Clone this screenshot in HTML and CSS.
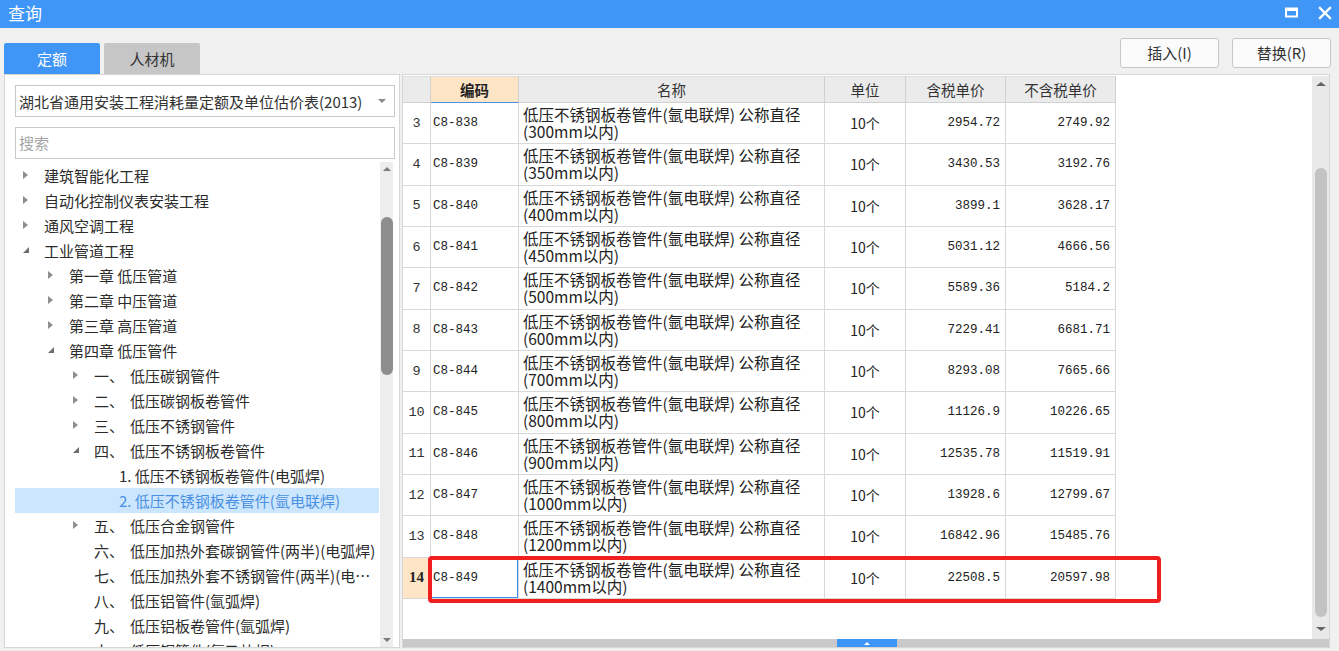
FILE: index.html
```html
<!DOCTYPE html>
<html lang="zh-CN">
<head>
<meta charset="utf-8">
<title>查询</title>
<link rel="stylesheet" href="styles.css">
</head>
<body>
<div class="titlebar">
  <span class="title">查询</span>
  <div class="winbtns">
    <svg class="wmax" width="14" height="12" viewBox="0 0 14 12"><rect x="1" y="1.5" width="11" height="8" fill="none" stroke="#fff" stroke-width="2"/><rect x="1" y="1" width="11" height="3" fill="#fff"/></svg>
    <svg class="wclose" width="14" height="14" viewBox="0 0 14 14"><path d="M2 2 L12 12 M12 2 L2 12" stroke="#fff" stroke-width="2.4" stroke-linecap="square"/></svg>
  </div>
</div>

<div class="toolbar">
  <div class="tabs">
    <div class="tab active">定额</div>
    <div class="tab">人材机</div>
  </div>
  <div class="actions">
    <div class="btn">插入(I)</div>
    <div class="btn">替换(R)</div>
  </div>
</div>

<div class="content">
  <div class="left">
    <div class="select"><span>湖北省通用安装工程消耗量定额及单位估价表(2013)</span><span class="caret"></span></div>
    <div class="search">搜索</div>
    <div class="tree-wrap">
      <div class="tree">
        <div class="row l1"><span class="arr r"></span><span class="txt">建筑智能化工程</span></div>
        <div class="row l1"><span class="arr r"></span><span class="txt">自动化控制仪表安装工程</span></div>
        <div class="row l1"><span class="arr r"></span><span class="txt">通风空调工程</span></div>
        <div class="row l1"><span class="arr d"></span><span class="txt">工业管道工程</span></div>
        <div class="row l2"><span class="arr r"></span><span class="txt">第一章 低压管道</span></div>
        <div class="row l2"><span class="arr r"></span><span class="txt">第二章 中压管道</span></div>
        <div class="row l2"><span class="arr r"></span><span class="txt">第三章 高压管道</span></div>
        <div class="row l2"><span class="arr d"></span><span class="txt">第四章 低压管件</span></div>
        <div class="row l3"><span class="arr r"></span><span class="no">一、</span><span class="txt">低压碳钢管件</span></div>
        <div class="row l3"><span class="arr r"></span><span class="no">二、</span><span class="txt">低压碳钢板卷管件</span></div>
        <div class="row l3"><span class="arr r"></span><span class="no">三、</span><span class="txt">低压不锈钢管件</span></div>
        <div class="row l3"><span class="arr d"></span><span class="no">四、</span><span class="txt">低压不锈钢板卷管件</span></div>
        <div class="row l4"><span class="arr"></span><span class="txt">1. 低压不锈钢板卷管件(电弧焊)</span></div>
        <div class="row l4 sel"><span class="arr"></span><span class="txt">2. 低压不锈钢板卷管件(氩电联焊)</span></div>
        <div class="row l3"><span class="arr r"></span><span class="no">五、</span><span class="txt">低压合金钢管件</span></div>
        <div class="row l3"><span class="arr"></span><span class="no">六、</span><span class="txt">低压加热外套碳钢管件(两半)(电弧焊)</span></div>
        <div class="row l3"><span class="arr"></span><span class="no">七、</span><span class="txt">低压加热外套不锈钢管件(两半)(电弧焊)</span></div>
        <div class="row l3"><span class="arr"></span><span class="no">八、</span><span class="txt">低压铝管件(氩弧焊)</span></div>
        <div class="row l3"><span class="arr"></span><span class="no">九、</span><span class="txt">低压铝板卷管件(氩弧焊)</span></div>
        <div class="row l3"><span class="arr"></span><span class="no">十、</span><span class="txt">低压铜管件(氧乙炔焊)</span></div>
      </div>
      <div class="vscroll slim">
        <span class="up"></span>
        <div class="track"><div class="thumb"></div></div>
        <span class="down"></span>
      </div>
    </div>
  </div>

  <div class="right">
    <div class="grid-area">
      <div class="grid">
        <div class="h rn"></div><div class="h hcode">编码</div><div class="h">名称</div><div class="h">单位</div><div class="h">含税单价</div><div class="h">不含税单价</div>

        <div class="c rn">3</div><div class="c code">C8-838</div><div class="c name">低压不锈钢板卷管件(氩电联焊) 公称直径<br>(300mm以内)</div><div class="c unit">10个</div><div class="c price">2954.72</div><div class="c price">2749.92</div>
        <div class="c rn">4</div><div class="c code">C8-839</div><div class="c name">低压不锈钢板卷管件(氩电联焊) 公称直径<br>(350mm以内)</div><div class="c unit">10个</div><div class="c price">3430.53</div><div class="c price">3192.76</div>
        <div class="c rn">5</div><div class="c code">C8-840</div><div class="c name">低压不锈钢板卷管件(氩电联焊) 公称直径<br>(400mm以内)</div><div class="c unit">10个</div><div class="c price">3899.1</div><div class="c price">3628.17</div>
        <div class="c rn">6</div><div class="c code">C8-841</div><div class="c name">低压不锈钢板卷管件(氩电联焊) 公称直径<br>(450mm以内)</div><div class="c unit">10个</div><div class="c price">5031.12</div><div class="c price">4666.56</div>
        <div class="c rn">7</div><div class="c code">C8-842</div><div class="c name">低压不锈钢板卷管件(氩电联焊) 公称直径<br>(500mm以内)</div><div class="c unit">10个</div><div class="c price">5589.36</div><div class="c price">5184.2</div>
        <div class="c rn">8</div><div class="c code">C8-843</div><div class="c name">低压不锈钢板卷管件(氩电联焊) 公称直径<br>(600mm以内)</div><div class="c unit">10个</div><div class="c price">7229.41</div><div class="c price">6681.71</div>
        <div class="c rn">9</div><div class="c code">C8-844</div><div class="c name">低压不锈钢板卷管件(氩电联焊) 公称直径<br>(700mm以内)</div><div class="c unit">10个</div><div class="c price">8293.08</div><div class="c price">7665.66</div>
        <div class="c rn">10</div><div class="c code">C8-845</div><div class="c name">低压不锈钢板卷管件(氩电联焊) 公称直径<br>(800mm以内)</div><div class="c unit">10个</div><div class="c price">11126.9</div><div class="c price">10226.65</div>
        <div class="c rn">11</div><div class="c code">C8-846</div><div class="c name">低压不锈钢板卷管件(氩电联焊) 公称直径<br>(900mm以内)</div><div class="c unit">10个</div><div class="c price">12535.78</div><div class="c price">11519.91</div>
        <div class="c rn">12</div><div class="c code">C8-847</div><div class="c name">低压不锈钢板卷管件(氩电联焊) 公称直径<br>(1000mm以内)</div><div class="c unit">10个</div><div class="c price">13928.6</div><div class="c price">12799.67</div>
        <div class="c rn">13</div><div class="c code">C8-848</div><div class="c name">低压不锈钢板卷管件(氩电联焊) 公称直径<br>(1200mm以内)</div><div class="c unit">10个</div><div class="c price">16842.96</div><div class="c price">15485.76</div>
        <div class="c rn cur">14</div><div class="c code focus">C8-849</div><div class="c name">低压不锈钢板卷管件(氩电联焊) 公称直径<br>(1400mm以内)</div><div class="c unit">10个</div><div class="c price">22508.5</div><div class="c price">20597.98</div>
      </div>
      <div class="fill"></div>
      <div class="vscroll wide">
        <span class="up"></span>
        <div class="track"><div class="thumb"></div></div>
        <span class="down"></span>
      </div>
    </div>
    <div class="hscroll"><div class="hgap"></div><div class="hthumb"><span class="htri"></span></div></div>
    <div class="redbox"></div>
  </div>
</div>
</body>
</html>
```

FILE: styles.css
```css
html, body {
  margin: 0;
  padding: 0;
}
body {
  width: 1339px;
  height: 651px;
  overflow: hidden;
  background: #f0f0f0;
  font-family: "Noto Sans CJK SC", "Noto Sans", sans-serif;
  color: #333;
  display: flex;
  flex-direction: column;
}

/* title bar */
.titlebar {
  height: 28px;
  flex: none;
  background: #3f96f7;
  display: flex;
  align-items: center;
  justify-content: space-between;
  padding: 0 7px 0 8px;
}
.title {
  color: #fff;
  font-size: 17px;
  line-height: 28px;
  margin-top: -3px;
}
.winbtns {
  display: flex;
  align-items: center;
  gap: 19px;
  margin-top: -3px;
}

/* toolbar */
.toolbar {
  height: 46px;
  flex: none;
  display: flex;
  justify-content: space-between;
  padding: 0 8px 0 4px;
}
.tabs {
  align-self: flex-end;
  display: flex;
  gap: 4px;
}
.tab {
  width: 96px;
  height: 31px;
  background: #c6c6c6;
  border-radius: 2px 2px 0 0;
  font-size: 15px;
  line-height: 31px;
  text-align: center;
  color: #333;
}
.tab.active {
  background: #3f96f7;
  color: #fff;
}
.actions {
  display: flex;
  gap: 13px;
  margin-top: 10px;
}
.btn {
  width: 97px;
  height: 28px;
  border: 1px solid #c6c6c6;
  border-radius: 3px;
  background: #fbfbfb;
  font-size: 15px;
  line-height: 28px;
  text-align: center;
  color: #333;
}

/* content */
.content {
  height: 574px;
  flex: none;
  display: flex;
  gap: 2px;
  padding: 0 9px 0 4px;
}
.left {
  width: 396px;
  box-sizing: border-box;
  border: 1px solid #d6d6d6;
  background: #fff;
  padding: 10px 4px 0 10px;
  display: flex;
  flex-direction: column;
}
.select {
  width: 380px;
  height: 32px;
  box-sizing: border-box;
  border: 1px solid #c8c8c8;
  display: flex;
  align-items: center;
  justify-content: space-between;
  padding: 0 8px 0 3px;
  font-size: 15px;
  color: #333;
  flex: none;
}
.caret {
  width: 0;
  height: 0;
  border-top: 4px solid #8a8a8a;
  border-left: 4px solid transparent;
  border-right: 4px solid transparent;
}
.search {
  width: 380px;
  height: 32px;
  box-sizing: border-box;
  border: 1px solid #c8c8c8;
  margin-top: 10px;
  padding-left: 3px;
  font-size: 15px;
  line-height: 30px;
  color: #a6a6a6;
  flex: none;
}
.tree-wrap {
  margin-top: 3px;
  flex: 1;
  min-height: 0;
  display: flex;
}
.tree {
  width: 364px;
  flex: none;
  overflow: hidden;
  padding-top: 0.5px;
}
.row {
  height: 25px;
  display: flex;
  align-items: center;
  font-size: 15px;
  color: #2b2b2b;
  white-space: nowrap;
}
.row.l1 { padding-left: 8px; }
.row.l2 { padding-left: 33px; }
.row.l3 { padding-left: 58px; }
.row.l4 { padding-left: 83px; }
.row.sel {
  background: #cce6fd;
  color: #4a90e2;
}
.arr {
  width: 21px;
  height: 25px;
  flex: none;
  position: relative;
}
.arr.r::before {
  content: "";
  position: absolute;
  left: 0;
  top: 8px;
  border-left: 5px solid #8e8e8e;
  border-top: 4.5px solid transparent;
  border-bottom: 4.5px solid transparent;
}
.arr.d::before {
  content: "";
  position: absolute;
  left: 0;
  top: 9px;
  border-bottom: 6px solid #6e6e6e;
  border-left: 6px solid transparent;
}
.no {
  width: 36px;
  flex: none;
}
.txt {
  flex: 1;
  min-width: 0;
  overflow: hidden;
  text-overflow: ellipsis;
}

/* scrollbars */
.vscroll {
  flex: none;
  display: flex;
  flex-direction: column;
  align-items: center;
  background: #ededed;
}
.vscroll.slim {
  width: 13px;
  margin-left: 1px;
}
.vscroll .up, .vscroll .down {
  width: 0;
  height: 0;
  flex: none;
  border-left: 4px solid transparent;
  border-right: 4px solid transparent;
}
.vscroll .up {
  border-bottom: 4px solid #7a7a7a;
  margin-top: 5px;
}
.vscroll .down {
  border-top: 4px solid #7a7a7a;
  margin-bottom: 5px;
}
.vscroll .track {
  flex: 1;
  width: 100%;
  display: flex;
  justify-content: center;
}
.vscroll.slim .thumb {
  width: 12px;
  height: 158px;
  margin-top: 46px;
  border-radius: 6px;
  background: #8d8d8d;
}
.vscroll.wide {
  width: 17px;
  background: #e9e9e9;
}
.vscroll.wide .up {
  margin-top: 6px;
  border-left-width: 5px;
  border-right-width: 5px;
  border-bottom-color: #666;
}
.vscroll.wide .down {
  margin-bottom: 8px;
  border-left-width: 5px;
  border-right-width: 5px;
  border-top-color: #666;
}
.vscroll.wide .thumb {
  width: 12px;
  margin: 82px 0 10px 0;
  border-radius: 6px;
  background: #c3c3c3;
}

/* right panel */
.right {
  position: relative;
  width: 928px;
  box-sizing: border-box;
  border: 1px solid #d6d6d6;
  background: #fff;
  padding-top: 1px;
  display: flex;
  flex-direction: column;
}
.grid-area {
  height: 563px;
  flex: none;
  display: flex;
}
.fill {
  flex: 1;
}
.grid {
  display: grid;
  grid-template-columns: 28px 88px 306px 81px 100px 110px;
  grid-template-rows: 27px;
  grid-auto-rows: 41.33px;
  align-self: flex-start;
}
.h, .c {
  box-sizing: border-box;
  border-right: 1px solid #d8d8d8;
  border-bottom: 1px solid #d8d8d8;
  display: flex;
  align-items: center;
  overflow: hidden;
  white-space: nowrap;
}
.h {
  background: #ebebeb;
  justify-content: center;
  font-size: 14.5px;
  color: #333;
  border-color: #d0d0d0;
  border-top: 1px solid #dcdcdc;
}
.h.hcode {
  background: #fde5c6;
  font-weight: bold;
  color: #222;
  border-bottom: 1px solid #4a90e2;
}
.c {
  background: #fff;
  color: #222;
}
.c.rn {
  justify-content: center;
  font-family: "Liberation Mono", monospace;
  font-size: 13.5px;
  color: #333;
}
.c.rn.cur {
  background: #fde5c6;
  font-family: "Liberation Serif", serif;
  font-weight: bold;
  font-size: 15px;
  color: #222;
}
.c.code {
  padding-left: 2px;
  font-family: "Liberation Mono", monospace;
  font-size: 12.5px;
}
.c.code.focus {
  box-shadow: inset 0 0 0 1px #3d8ee8;
}
.c.name {
  padding-left: 4px;
  font-size: 15.5px;
  line-height: 17px;
}
.c.unit {
  justify-content: center;
  font-size: 14px;
}
.c.price {
  justify-content: flex-end;
  padding-right: 5px;
  font-family: "Liberation Mono", monospace;
  font-size: 12.5px;
}

.hscroll {
  height: 8px;
  flex: none;
  background: #c9c9c9;
  display: flex;
}
.hgap {
  width: 434px;
  flex: none;
}
.hthumb {
  width: 60px;
  background: #3d95f5;
  display: flex;
  justify-content: center;
  align-items: center;
}
.htri {
  width: 0;
  height: 0;
  border-bottom: 3px solid #fff;
  border-left: 3.5px solid transparent;
  border-right: 3.5px solid transparent;
}

.redbox {
  position: absolute;
  left: 25px;
  top: 481px;
  width: 733px;
  height: 47px;
  box-sizing: border-box;
  border: 4px solid #f01e1e;
  border-radius: 4px;
  pointer-events: none;
}
```
